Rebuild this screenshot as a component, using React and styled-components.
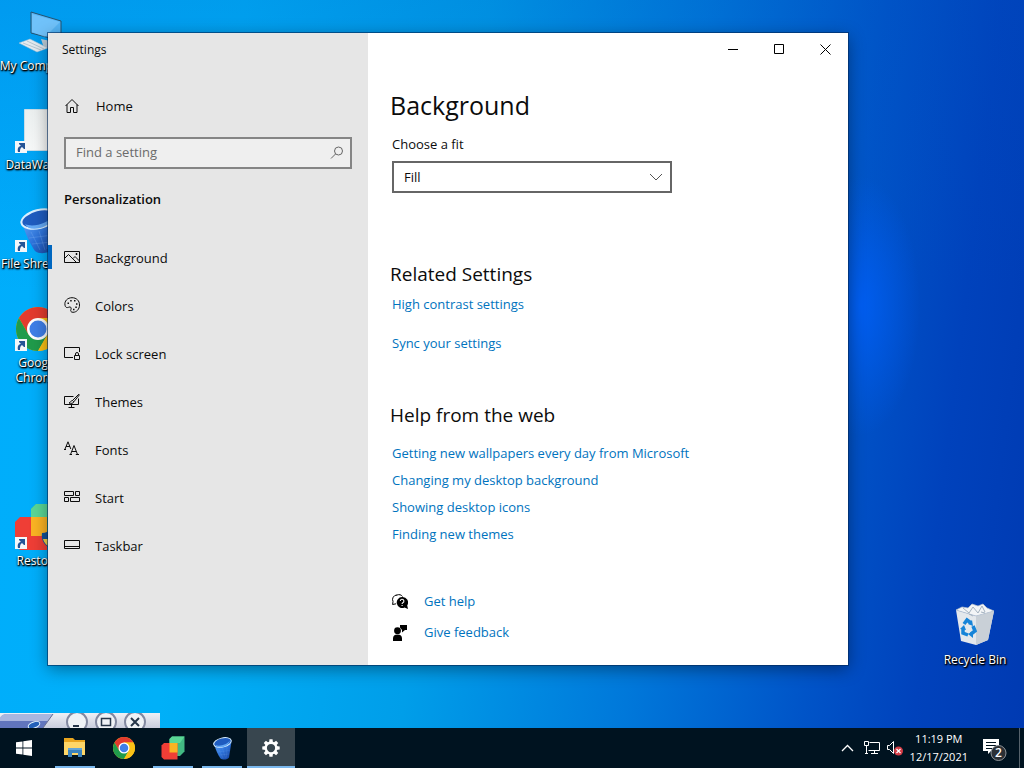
import React from 'react';
import styled, { createGlobalStyle } from 'styled-components';

const COLORS = {
  link: '#0073be',
  text: '#0c0c0c',
  sidebar: '#e6e6e6',
  taskbar: '#001320',
  accent: '#0067c0',
};

const GlobalStyle = createGlobalStyle`
  *, *::before, *::after {
    box-sizing: border-box;
  }

  body {
    margin: 0;
    font-family: 'Open Sans', 'Noto Sans', sans-serif;
    font-size: 13px;
    color: ${COLORS.text};
  }

  button, input, select {
    font: inherit;
    color: inherit;
  }

  svg {
    display: block;
  }
`;

/* ---------- sidebar icons ---------- */

const HomeIcon = () => (
  <LineIcon viewBox="0 0 16 16">
    <path d="M1.500 8 8 1.500 14.500 8M3 6.500v8h3.500v-5h3v5H13v-8" />
  </LineIcon>
);

const PictureIcon = () => (
  <LineIcon viewBox="0 0 16 16">
    <path d="M.5 2.500h15v11H.5zM.5 9.500l4-4 8 8M9 9.500l2-2 4.500 4.500" />
    <path d="M12 4.500h1v1h-1z" />
  </LineIcon>
);

const PaletteIcon = () => (
  <LineIcon viewBox="0 0 16 16">
    <path d="M1 8.200C.2 4 3.500.7 8 .7s7.500 3 7.500 7.300-3 7.300-6.500 7.300c-2 0-2.800-1.300-2-3 .7-1.800-.6-2.800-2-2.200-1.800.8-3.500.8-4-1.900z" />
    <path d="M3.500 6.200H5M6.200 3.800h1.500M10 3.800h1.500M12 7h1.500M11.300 10.200h1.500M9 12.500h1.500" strokeWidth="1.500" />
  </LineIcon>
);

const LockScreenIcon = () => (
  <LineIcon viewBox="0 0 16 16">
    <path d="M9 12.500H.5v-10h15V7M10.500 10.500h5v4h-5zM11.500 10.500V9a1.500 1.500 0 0 1 3 0v1.500" />
  </LineIcon>
);

const ThemesIcon = () => (
  <LineIcon viewBox="0 0 16 16">
    <path d="M9.500 3.500h-9v8h14v-6M7.500 11.500v3M4.500 14.500h6" />
    <path d="M14.800 1.200 8.500 7.500l1.300 1.300 5.500-6.800zM8.500 7.500c-2 0-1.500 2-3.500 2.500 1.800.8 4.500.5 4.800-1.200" />
  </LineIcon>
);

const FontsIcon = () => (
  <LineIcon viewBox="0 0 16 16">
    <path d="M1 8 4 .8 6.800 8M2 5.500h4M0 8.500h2M6.500 13.500 10 4.500l3.500 9M7.800 10.500h4.500M5.500 13.500h2.500M11.800 13.500H15" />
  </LineIcon>
);

const StartTilesIcon = () => (
  <LineIcon viewBox="0 0 16 16">
    <path d="M.5 2.500h9v4h-9zM11.500 2.500h4v4h-4zM.5 8.500h4v4h-4zM6.500 8.500h9v4h-9z" />
  </LineIcon>
);

const TaskbarIcon = () => (
  <LineIcon viewBox="0 0 16 16">
    <path d="M.5 3.500h15v8H.5zM.5 9.500h15" />
  </LineIcon>
);

const SearchIcon = () => (
  <LineIcon viewBox="0 0 16 16" aria-hidden="true">
    <circle cx="10.500" cy="6" r="4" />
    <path d="M7.500 9 3 13.500" />
  </LineIcon>
);

const ChevronDown = () => (
  <LineIcon viewBox="0 0 16 16" aria-hidden="true">
    <path d="m2 5 6 6 6-6" />
  </LineIcon>
);

const HelpIcon = () => (
  <svg viewBox="0 0 16 16" width="16" height="16">
    <path d="M5 1a4.500 4.500 0 0 0-4 6.500L.6 10.500 4 9.800" fill="none" stroke="#000" />
    <path d="M4.500 1.200C7 0 9.500.8 10.500 2.500" fill="none" stroke="#000" />
    <path d="M10 3a5.500 5.500 0 1 0 2.500 10.500L16 15l-.8-3.600A5.500 5.500 0 0 0 10 3z" fill="#000" />
    <path d="M8.300 7a1.800 1.800 0 1 1 2.500 1.700c-.5.200-.7.500-.7 1.200M10.100 11v1.100" fill="none" stroke="#fff" strokeWidth="1.100" />
  </svg>
);

const FeedbackIcon = () => (
  <svg viewBox="0 0 16 16" width="16" height="16">
    <circle cx="5.500" cy="5.700" r="3.400" />
    <path d="M1 16v-2.500C1 11 2.500 9.600 5.500 9.600S10 11 10 13.500V16zM8 0h7v5h-2l-3 2.500V5L8 2.500z" />
  </svg>
);

/* ---------- desktop and taskbar artwork ---------- */

const ComputerArt = () => (
  <svg viewBox="0 0 48 48" width="48" height="48">
    <path d="m17 4 30 9v20l-30-8z" fill="#55b4f5" stroke="#24526f" />
    <path d="m18 6 28 8-15 15-13-5z" fill="#8bd0ff" opacity=".5" />
    <path d="m27 31 14 3 7 6H30z" fill="#bccbd6" />
    <path d="m5 35 11-4 18 9-11 4z" fill="#e5ebf0" stroke="#9ebed2" strokeWidth=".5" />
    <path d="m9 35 18 7m-14-9 17 8" stroke="#b6c6d1" />
  </svg>
);

const PageArt = () => (
  <svg viewBox="0 0 48 48" width="48" height="48">
    <defs>
      <linearGradient id="page" x2="1" y2="1">
        <stop stopColor="#e9eeee" />
        <stop offset="1" stopColor="#fff" />
      </linearGradient>
    </defs>
    <path d="M10.500 2.500h31v41h-31z" fill="url(#page)" stroke="#c8dde8" />
  </svg>
);

const BucketArt = ({ size }) => (
  <svg viewBox="0 0 48 48" width={size} height={size}>
    <defs>
      <linearGradient id="bucket" x2="1" y2="1">
        <stop stopColor="#64a9f5" />
        <stop offset=".5" stopColor="#2e74dc" />
        <stop offset="1" stopColor="#143f9c" />
      </linearGradient>
    </defs>
    <path d="M8 16c3 11 8 22 13 29 5 4 15 2 17-2l5-32z" fill="url(#bucket)" />
    <path d="m17 26 9 18m-1-19 6 19m3-22-1 21M15 32l24-3M18 38l20-2" stroke="#8fc1fa" opacity=".25" fill="none" />
    <ellipse cx="25" cy="13" rx="18" ry="9" transform="rotate(-14 25 13)" fill="#1f5cc0" stroke="#d9efff" strokeWidth="2" />
    <path d="M11 18c8 4 24-1 29-9-2 7-6 11-14 13-8 2-13 0-15-4z" fill="#64a9f5" />
  </svg>
);

const ChromeArt = ({ size }) => (
  <svg viewBox="0 0 48 48" width={size} height={size}>
    <circle cx="24" cy="24" r="22" fill="#fbc116" />
    <path d="M4.950 13A22 22 0 0 1 43.050 13H24L14.500 29.500z" fill="#e33b2e" />
    <path d="M4.950 13A22 22 0 0 0 24 46l9.500-16.500L14.500 29.500z" fill="#209b4b" />
    <path d="M24 13h19.050A22 22 0 0 1 24 46l9.500-16.500z" fill="#fbc116" />
    <circle cx="24" cy="24" r="11" fill="#fff" />
    <circle cx="24" cy="24" r="8.500" fill="#3f7fe8" />
  </svg>
);

const CubesArt = ({ size, shield }) => (
  <svg viewBox="0 0 48 48" width={size} height={size}>
    <path d="m17 6 5-5h25v30l-9 9H17z" fill="#42b983" />
    <path d="m17 6 5-5h25l-9 13H17z" fill="#5ad796" />
    <path d="M6 14h27v33H6l-5-5V19z" fill="#ef3e36" />
    <path d="M17 14h16v19H17z" fill="#fbb423" />
    {shield && (
      <path d="M28 30c4 0 6-2 8-3v18c-6-3-9-8-8-15z" fill="#12539a" />
    )}
    {shield && <path d="M29 36h8v9c-4-2-7-5-8-9z" fill="#f9d342" />}
  </svg>
);

const RecycleBinArt = () => (
  <svg viewBox="0 0 48 48" width="48" height="48">
    <path d="m5 8 5 31 15 4 12-5 6-29-18 5z" fill="#e4e8ec" />
    <path d="m25 14 18-5-6 29-12 5z" fill="#c9d0d7" />
    <path d="m5 8 6-3 6 1 4-4 6 2 5-2 4 4 7 3-18 5z" fill="#f3f5f7" stroke="#b6c2cd" strokeWidth=".7" />
    <path d="m12 6 6 5 4-6 5 6 4-7 3 6m-16 2 4 2m8-4 4 1" fill="none" stroke="#a4b2bf" />
    <g fill="none" stroke="#1684d8" strokeWidth="3.500">
      <path d="m13 22 3-4 4 3" />
      <path d="m22 24 2 5-4 3" />
      <path d="m17 33-5-2v-5" />
    </g>
    <path d="m21 18 1 6-5-2zM22 29v7l-5-4zM9 27l4-4 2 5z" fill="#1684d8" />
  </svg>
);

const ShortcutBadge = () => (
  <Badge viewBox="0 0 12 12" width="12" height="12">
    <path d="M0 0h12v12H0z" fill="#f4f7fa" />
    <path d="M3 11c-1-4 1-6 3-6L4 3V2h6v6H9L7 6C5 7 5 9 5 11z" fill="#245497" />
  </Badge>
);

const WindowsLogo = () => (
  <svg viewBox="0 0 16 16" width="16" height="16" fill="#fff">
    <path d="M0 2.300 6.500 1.400v6.200H0zM7.300 1.300 16 0v7.600H7.300zM0 8.400h6.500v6.200L0 13.700zM7.300 8.400H16V16l-8.700-1.200z" />
  </svg>
);

const FolderArt = () => (
  <svg viewBox="0 0 24 24" width="24" height="24">
    <path d="M1 2h9l2 2h10v15H1z" fill="#e9a51e" />
    <path d="M1 6h21v13H1z" fill="#fed667" />
    <path d="M5 12h14v9h-4v-4H9v4H5z" fill="#3b83bd" />
    <path d="M5 12h14v2H5z" fill="#63a5d5" />
  </svg>
);

const GearArt = () => (
  <svg viewBox="0 0 24 24" width="22" height="22">
    <circle cx="12" cy="12" r="5.800" fill="none" stroke="#fff" strokeWidth="2.600" />
    <g fill="#fff">
      {[0, 45, 90, 135, 180, 225, 270, 315].map((angle) => (
        <path key={angle} d="M10.300 2.500h3.400l.5 4H9.800z" transform={`rotate(${angle} 12 12)`} />
      ))}
    </g>
  </svg>
);

const NetworkIcon = () => (
  <svg viewBox="0 0 16 16" width="16" height="16" fill="none" stroke="#fff">
    <path d="M5.500 2.500h10v8h-11M10.500 10.500v3M7 13.500h7M.5 1.500h4v4h-4zM2.500 5.500v8M1 13.500h3" />
  </svg>
);

const VolumeIcon = () => (
  <svg viewBox="0 0 18 16" width="18" height="16">
    <path d="M1.500 5.500h2l4-4v12l-4-4h-2z" fill="none" stroke="#fff" />
    <circle cx="12.500" cy="11" r="4.500" fill="#d43c46" />
    <path d="m10.500 9 4 4m0-4-4 4" stroke="#fff" strokeWidth="1.200" />
  </svg>
);

const ChevronUp = () => (
  <svg viewBox="0 0 18 14" width="18" height="14" fill="none" stroke="#fff" strokeWidth="1.300">
    <path d="m2 10 5.500-5.500L13 10" />
  </svg>
);

const NotificationIcon = () => (
  <svg viewBox="0 0 26 26" width="26" height="26">
    <path d="M1 4h16v12H9l-3 3v-3H1z" fill="#fff" />
    <path d="M4 7.500h10M4 10.500h10M4 13.500h6" stroke="#001320" />
    <circle cx="16.500" cy="18" r="7.500" fill="#2c3035" stroke="#8f9499" />
    <text x="16.500" y="22" textAnchor="middle" fontSize="12" fontWeight="600" fill="#fff">2</text>
  </svg>
);

const NAV_ITEMS = [
  { label: 'Background', Icon: PictureIcon, active: true },
  { label: 'Colors', Icon: PaletteIcon },
  { label: 'Lock screen', Icon: LockScreenIcon },
  { label: 'Themes', Icon: ThemesIcon },
  { label: 'Fonts', Icon: FontsIcon },
  { label: 'Start', Icon: StartTilesIcon },
  { label: 'Taskbar', Icon: TaskbarIcon },
];

const WEB_LINKS = [
  'Getting new wallpapers every day from Microsoft',
  'Changing my desktop background',
  'Showing desktop icons',
  'Finding new themes',
];

const SHORTCUTS = [
  { label: 'My Computer', art: <ComputerArt />, top: 8 },
  { label: 'DataWagon', art: <PageArt />, top: 107, linked: true },
  { label: 'File Shredder', art: <BucketArt size={48} />, top: 206, linked: true },
  { label: 'Google\nChrome', art: <ChromeArt size={48} />, top: 305, linked: true },
  { label: 'Restore', art: <CubesArt size={48} shield />, top: 503, linked: true },
];

const TASKS = [
  { label: 'File Explorer', art: <FolderArt />, open: true },
  { label: 'Google Chrome', art: <ChromeArt size={24} /> },
  { label: 'Restore', art: <CubesArt size={24} />, open: true },
  { label: 'File Shredder', art: <BucketArt size={24} />, open: true },
  { label: 'Settings', art: <GearArt />, open: true, active: true },
];

const DesktopIcons = () => {
  return (
    <>
      {SHORTCUTS.map(({ label, art, top, linked }) => (
        <Shortcut key={label} $top={top}>
          <Art>
            {art}
            {linked && <ShortcutBadge />}
          </Art>
          <ShortcutLabel>{label}</ShortcutLabel>
        </Shortcut>
      ))}
      <RecycleBin>
        <RecycleBinArt />
        <ShortcutLabel>Recycle Bin</ShortcutLabel>
      </RecycleBin>
    </>
  );
};

const MiniWindow = () => {
  return (
    <MiniFrame>
      <svg viewBox="0 0 60 15" width="60" height="15">
        <path d="M0 15V6q1-4 6-5h47L43 15z" fill="#6175bd" />
        <path d="M0 5q2-4 6-4h47l-5 7H0z" fill="#aab6df" />
        <ellipse cx="34" cy="12" rx="6" ry="3" transform="rotate(-20 34 12)" fill="#2360ba" stroke="#e2f4ff" />
        <path d="M43 15 53 1" stroke="#6a7293" />
      </svg>
      <MiniControls>
        <MiniButton aria-label="Minimize shredder">
          <svg viewBox="0 0 12 12" width="12" height="12"><path d="M2 10h6" stroke="#26364a" strokeWidth="2" /></svg>
        </MiniButton>
        <MiniButton aria-label="Maximize shredder">
          <svg viewBox="0 0 12 12" width="12" height="12"><path d="M1.500 2.500h9v7h-9z" fill="none" stroke="#26364a" strokeWidth="1.500" /></svg>
        </MiniButton>
        <MiniButton aria-label="Close shredder">
          <svg viewBox="0 0 12 12" width="12" height="12"><path d="m2 2 8 8m0-8-8 8" stroke="#26364a" strokeWidth="2" /></svg>
        </MiniButton>
      </MiniControls>
    </MiniFrame>
  );
};

const Sidebar = () => {
  return (
    <SidebarPanel>
      <WindowTitle>Settings</WindowTitle>
      <HomeLink href="#home">
        <HomeIcon />
        Home
      </HomeLink>
      <SearchBox>
        <SearchInput type="text" placeholder="Find a setting" aria-label="Find a setting" />
        <SearchIcon />
      </SearchBox>
      <SectionName>Personalization</SectionName>
      <nav>
        {NAV_ITEMS.map(({ label, Icon, active }) => (
          <NavLink key={label} href="#nav" $active={active}>
            <Icon />
            <NavLabel>{label}</NavLabel>
          </NavLink>
        ))}
      </nav>
    </SidebarPanel>
  );
};

const Content = () => {
  return (
    <ContentPanel>
      <WindowControls>
        <ControlButton aria-label="Minimize">
          <svg viewBox="0 0 11 11" width="11" height="11"><path d="M0 5.500h10" stroke="#000" /></svg>
        </ControlButton>
        <ControlButton aria-label="Maximize">
          <svg viewBox="0 0 11 11" width="11" height="11"><path d="M.5.5h9v9h-9z" fill="none" stroke="#000" /></svg>
        </ControlButton>
        <ControlButton aria-label="Close">
          <svg viewBox="0 0 11 11" width="11" height="11"><path d="m.5.5 10 10m0-10-10 10" stroke="#000" /></svg>
        </ControlButton>
      </WindowControls>
      <ContentBody>
        <Title>Background</Title>
        <FieldLabel htmlFor="fit">Choose a fit</FieldLabel>
        <SelectWrapper>
          <FitSelect id="fit" defaultValue="Fill">
            <option>Fill</option>
            <option>Fit</option>
            <option>Stretch</option>
          </FitSelect>
          <ChevronDown />
        </SelectWrapper>
        <Related>
          <Heading>Related Settings</Heading>
          <RelatedLinks>
            <TextLink href="#contrast">High contrast settings</TextLink>
            <TextLink href="#sync">Sync your settings</TextLink>
          </RelatedLinks>
        </Related>
        <WebHelp>
          <Heading>Help from the web</Heading>
          <WebLinks>
            {WEB_LINKS.map((label) => (
              <TextLink key={label} href="#web">{label}</TextLink>
            ))}
          </WebLinks>
        </WebHelp>
        <Support>
          <SupportRow>
            <HelpIcon />
            <TextLink href="#help">Get help</TextLink>
          </SupportRow>
          <SupportRow>
            <FeedbackIcon />
            <TextLink href="#feedback">Give feedback</TextLink>
          </SupportRow>
        </Support>
      </ContentBody>
    </ContentPanel>
  );
};

const Taskbar = () => {
  return (
    <TaskbarStrip>
      <StartButton aria-label="Start">
        <WindowsLogo />
      </StartButton>
      <Tasks>
        {TASKS.map(({ label, art, open, active }) => (
          <TaskButton key={label} aria-label={label} $open={open} $active={active}>
            {art}
          </TaskButton>
        ))}
      </Tasks>
      <Tray>
        <TrayButton aria-label="Show hidden icons"><ChevronUp /></TrayButton>
        <TrayButton aria-label="Network"><NetworkIcon /></TrayButton>
        <TrayButton aria-label="Volume"><VolumeIcon /></TrayButton>
        <Clock>
          <span>11:19 PM</span>
          <span>12/17/2021</span>
        </Clock>
        <TrayButton aria-label="Notifications"><NotificationIcon /></TrayButton>
      </Tray>
      <ShowDesktop aria-label="Show desktop" />
    </TaskbarStrip>
  );
};

const App = () => {
  return (
    <Screen>
      <GlobalStyle />
      <Desktop>
        <DesktopIcons />
        <MiniWindow />
        <SettingsWindow>
          <Sidebar />
          <Content />
        </SettingsWindow>
      </Desktop>
      <Taskbar />
    </Screen>
  );
};

const Screen = styled.div`
  display: flex;
  flex-direction: column;
  height: 100vh;
  overflow: hidden;
`;

const Desktop = styled.main`
  position: relative;
  flex: 1;
  background:
    radial-gradient(ellipse 60px 130px at 84% 42%, rgba(0, 96, 250, 0.8), transparent),
    linear-gradient(rgba(0, 80, 190, 0.2), transparent 40%),
    linear-gradient(97deg, #00adfc 0%, #00b0f8 22%, #009ee9 44%, #0078da 64%, #0054c8 80%, #0042bc 90%, #003ab2 100%);
`;

const Shortcut = styled.div`
  position: absolute;
  top: ${({ $top }) => $top}px;
  left: 0;
  width: 76px;
  display: flex;
  flex-direction: column;
  align-items: center;
`;

const RecycleBin = styled(Shortcut)`
  top: auto;
  bottom: 61px;
  left: auto;
  right: 11px;
`;

const Art = styled.div`
  position: relative;
  width: 48px;
  height: 48px;
`;

const Badge = styled.svg`
  position: absolute;
  left: 1px;
  bottom: 2px;
`;

const ShortcutLabel = styled.span`
  padding-top: 2px;
  font-size: 12px;
  line-height: 15px;
  text-align: center;
  white-space: pre;
  color: #fff;
  text-shadow: 0 1px 2px #000, 1px 1px 2px #000, 1px 1px 1px #000;
`;

const MiniFrame = styled.div`
  position: absolute;
  left: 0;
  bottom: 0;
  width: 160px;
  height: 15px;
  display: flex;
  overflow: hidden;
  background: linear-gradient(#eef0f5, #c9cddd);
`;

const MiniControls = styled.div`
  display: flex;
  gap: 7px;
  padding-left: 6px;
`;

const MiniButton = styled.button`
  display: grid;
  place-items: center;
  flex: none;
  width: 22px;
  height: 22px;
  margin-top: -2px;
  padding: 0;
  border: 2px solid #8288a0;
  border-radius: 50%;
  background: #eff2f6;
`;

const SettingsWindow = styled.section`
  position: absolute;
  top: 33px;
  right: 176px;
  bottom: 63px;
  left: 48px;
  display: flex;
  background: #fff;
  box-shadow: 0 0 0 1px rgba(0, 40, 90, 0.6), 0 4px 16px rgba(0, 0, 0, 0.4);
`;

const SidebarPanel = styled.aside`
  flex: 0 0 320px;
  background: ${COLORS.sidebar};
`;

const WindowTitle = styled.div`
  padding: 9px 14px 7px;
  font-size: 12px;
  line-height: 16px;
`;

const LineIcon = styled.svg`
  flex: none;
  width: 16px;
  height: 16px;
  fill: none;
  stroke: currentColor;
`;

const HomeLink = styled.a`
  display: flex;
  align-items: center;
  gap: 16px;
  height: 48px;
  margin-top: 16px;
  padding: 2px 16px 0;
  color: inherit;
  text-decoration: none;
`;

const SearchBox = styled.div`
  display: flex;
  align-items: center;
  height: 32px;
  margin: 8px 16px 0;
  padding: 0 6px 0 10px;
  border: 2px solid #858585;
  background: #efefef;
  color: #666;
`;

const SearchInput = styled.input`
  flex: 1;
  min-width: 0;
  padding: 0 0 2px;
  border: 0;
  background: transparent;
  outline: none;

  &::placeholder {
    color: #6b6b6b;
    opacity: 1;
  }
`;

const SectionName = styled.h2`
  margin: 20px 16px 24px;
  font-size: 13px;
  font-weight: 600;
  line-height: 20px;
`;

const NavLink = styled.a`
  display: flex;
  align-items: center;
  gap: 15px;
  height: 48px;
  padding-left: 16px;
  background: linear-gradient(${COLORS.accent}, ${COLORS.accent}) no-repeat 0 12px / ${({ $active }) => ($active ? '4px 24px' : '0 0')};
  color: inherit;
  text-decoration: none;
`;

const NavLabel = styled.span`
  padding-top: 2px;
`;

const ContentPanel = styled.div`
  flex: 1;
  min-width: 0;
`;

const WindowControls = styled.div`
  display: flex;
  justify-content: flex-end;
  height: 32px;
`;

const ControlButton = styled.button`
  display: grid;
  place-items: center;
  width: 46px;
  padding: 0;
  border: 0;
  background: none;
`;

const ContentBody = styled.div`
  padding: 20px 24px 0;
`;

const Title = styled.h1`
  margin: 0 -2px;
  font-size: 25px;
  font-weight: 400;
  line-height: 40px;
`;

const FieldLabel = styled.label`
  display: block;
  margin-top: 9px;
  line-height: 20px;
`;

const SelectWrapper = styled.div`
  position: relative;
  max-width: 280px;
  margin-top: 7px;

  svg {
    position: absolute;
    top: 8px;
    right: 8px;
    color: #555;
    pointer-events: none;
  }
`;

const FitSelect = styled.select`
  width: 100%;
  height: 32px;
  padding: 0 32px 0 10px;
  appearance: none;
  border: 2px solid #666;
  border-radius: 0;
  background: #fff;
`;

const Heading = styled.h2`
  margin: 0 -2px;
  font-size: 19px;
  font-weight: 400;
  line-height: 28px;
`;

const TextLink = styled.a`
  line-height: 19px;
  color: ${COLORS.link};
  text-decoration: none;
`;

const Related = styled.section`
  margin-top: 67px;
`;

const RelatedLinks = styled.div`
  display: flex;
  flex-direction: column;
  align-items: flex-start;
  gap: 20px;
  margin-top: 7px;
`;

const WebHelp = styled.section`
  margin-top: 48px;
`;

const WebLinks = styled.div`
  display: flex;
  flex-direction: column;
  align-items: flex-start;
  gap: 8px;
  margin-top: 15px;
`;

const Support = styled.div`
  display: flex;
  flex-direction: column;
  gap: 12px;
  margin-top: 48px;
`;

const SupportRow = styled.div`
  display: flex;
  align-items: center;
  gap: 16px;
`;

const TaskbarStrip = styled.footer`
  display: flex;
  flex: 0 0 40px;
  background: ${COLORS.taskbar};
  color: #fff;
`;

const StartButton = styled.button`
  display: grid;
  place-items: center;
  width: 48px;
  padding: 0;
  border: 0;
  background: none;
`;

const Tasks = styled.div`
  display: flex;
  gap: 1px;
  margin-left: 3px;
`;

const TaskButton = styled.button`
  display: grid;
  place-items: center;
  width: 48px;
  padding: 0;
  border: 0;
  background-color: ${({ $active }) => ($active ? '#38464f' : 'transparent')};
  background-image: ${({ $open }) => ($open ? 'linear-gradient(#7ab8ee, #7ab8ee)' : 'none')};
  background-repeat: no-repeat;
  background-position: center bottom;
  background-size: ${({ $active }) => ($active ? '100%' : '40px')} 2px;
`;

const Tray = styled.div`
  display: flex;
  align-items: center;
  gap: 6px;
  margin-left: auto;
  padding-right: 11px;
`;

const TrayButton = styled.button`
  padding: 0;
  border: 0;
  background: none;
`;

const Clock = styled.time`
  display: flex;
  flex-direction: column;
  margin-right: 8px;
  font-size: 11px;
  line-height: 18px;
  text-align: center;
`;

const ShowDesktop = styled.button`
  width: 5px;
  padding: 0;
  border: 0;
  border-left: 1px solid #56626b;
  background: none;
`;

export default App;
